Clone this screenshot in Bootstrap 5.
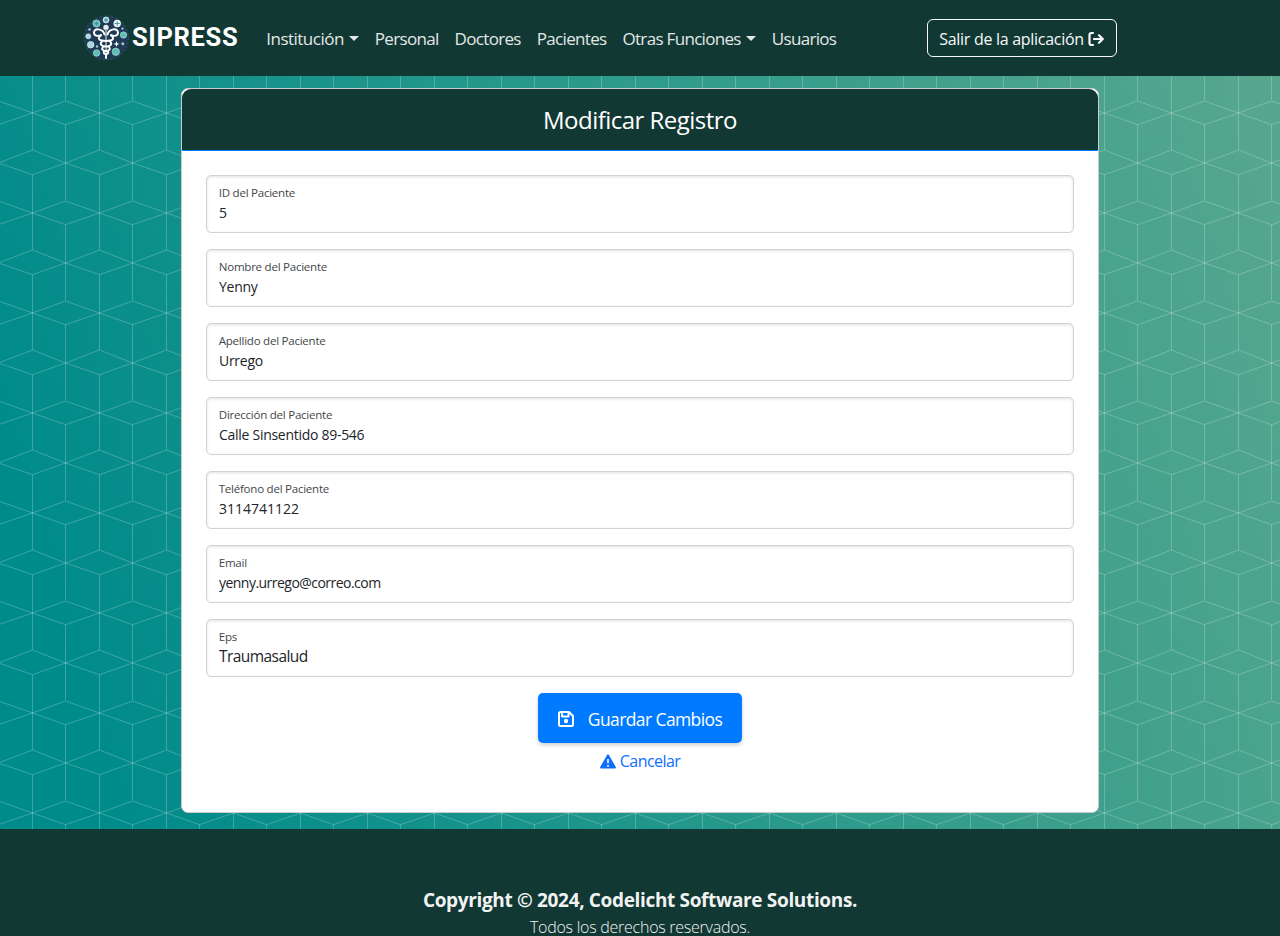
<!DOCTYPE html>
<html lang="es">
<head>
<meta charset="utf-8">
<meta name="viewport" content="width=device-width, initial-scale=1">
<title>SIPRESS</title>
<link href="https://cdn.jsdelivr.net/npm/bootstrap@5.3.0/dist/css/bootstrap.min.css" rel="stylesheet">
<style>
  html, body { height: 100%; }
  body {
    font-family: "Open Sans", "Noto Sans", sans-serif;
    letter-spacing: -.035em;
    overflow: hidden;
    background-image:
      url("data:image/svg+xml,%3Csvg xmlns='http://www.w3.org/2000/svg' width='67' height='100'%3E%3Cg fill='none' stroke='%23fff' stroke-opacity='.22'%3E%3Cpath d='M32.5 0V50M32.5 74.7V100M65.5 24.7V100'/%3E%3Cpath d='M-1.5 24.7L32.5 13L65.5 1L99.5 13M-34.500 13L-1.5 1L32.500 13L65.500 24.700L99.500 13M-1.500 63L32.500 50L65.500 63L32.500 74.700Z M65.500 63L99.500 50M65.500 63L99.500 74.700'/%3E%3C/g%3E%3C/svg%3E"),
      linear-gradient(73deg, #008b8b 10%, #2e9b8b 57%, #57a78e 98%);
    background-position: 0 0, 0 0;
    background-size: 67px 100px, 100% 936px;
  }
  .site-bar, .site-foot, .record-head { background-color: #123834; }
  .site-bar { height: 76px; }
  .site-bar .container { max-width: 1140px; }
  .brand-word { font: 700 25.5px/1 Roboto, sans-serif; letter-spacing: .65px; color: #fff; }
  .site-bar .nav-link { color: #e3e8e7; font-size: 17px; letter-spacing: -.04em; padding-top: 10px; }
  .site-bar .nav-item:first-child .nav-link { letter-spacing: -.03em; }
  .site-bar .dropdown-toggle::after { margin-left: 5px; }
  .site-bar .navbar-nav { margin-left: 20px; }
  .exit-btn { width: 190px; height: 38px; margin-right: 81px; font-size: 16px; padding: 8px 1px 6px 0; letter-spacing: -.018em; }
  .record { width: 918px; border: 1px solid #ccc; border-radius: 7px; margin-top: 12px; height: 725px; }
  .record-head { height: 62px; padding-top: 2px; border-bottom: 1px solid #007bff; border-radius: 9px 9px 0 0; color: #fff; }
  .record-head h1 { font-size: 24px; letter-spacing: -.022em; }
  .record .form-control, .record .form-select {
    font-size: 14px; letter-spacing: -.02em; color: #212529; border-color: #ced4da; border-radius: 5px;
    height: 58px; min-height: 58px; line-height: 1.25; background-image: none;
    box-shadow: inset 0 1px 3px rgba(0,0,0,.12);
  }
  .record .form-select { font-size: 15.5px; letter-spacing: -.036em; padding-top: 27px; padding-bottom: 9px; }
  .record input[type="tel"] { letter-spacing: 0; }
  .record input[type="email"] { letter-spacing: -.038em; }
  .record .form-floating > label,
  .record .form-floating > .form-control ~ label,
  .record .form-floating > .form-select ~ label {
    font-size: 13.6px; letter-spacing: -.022em; color: #212529; opacity: .85;
    transform: scale(.85) translateY(-6.2px) translateX(2px);
  }
  .save-btn { width: 204px; height: 50px; padding: 2px 1px 0 0; background: #007bff; font-size: 17.5px; letter-spacing: -.034em; gap: 13px; border-radius: 5px; box-shadow: 0 2px 4px rgba(0,0,0,.2); }
  .save-btn svg { margin-top: -1px; }
  .cancel-link { color: #0d6efd; font-size: 16px; line-height: 24px; margin-top: 6px; }
  .site-foot { height: 107px; margin-top: 16px; padding-top: 57px; color: #f1f3f3; }
  .foot-title { font-size: 19px; line-height: 29px; font-weight: 700; letter-spacing: -.018em; }
  .foot-sub { font-size: 16px; line-height: 24px; font-weight: 300; letter-spacing: -.016em; }
</style>
</head>
<body>
<nav class="navbar navbar-expand site-bar p-0">
  <div class="container">
    <a class="navbar-brand d-flex align-items-center p-0 m-0" href="#">
      <svg width="50" height="48" viewBox="82 14 50 48" aria-hidden="true">
        <circle cx="106.300" cy="38" r="22" fill="#203a56"/>
        <circle cx="106.300" cy="38" r="22" fill="none" stroke="#38606c" stroke-width=".8" stroke-dasharray="2 2"/>
        <g fill="#5cc0b8" stroke="#b5e2df" stroke-width=".6">
          <circle cx="96.500" cy="23.500" r="3.600"/><circle cx="123.500" cy="35" r="3.200"/><circle cx="115.800" cy="51.800" r="3.700"/><circle cx="96.600" cy="53" r="3.300"/>
        </g>
        <g fill="#a8d8dc" stroke="#dff" stroke-width=".6">
          <circle cx="90.700" cy="44.700" r="3.300"/><circle cx="88.300" cy="36.300" r="2.500"/><circle cx="106" cy="20" r="3"/>
        </g>
        <circle cx="117.200" cy="23.500" r="3.700" fill="#f2fafa"/>
        <path d="M117.200 21v5M114.700 23.500h5M106 18v4M104 20h4M96.500 21.500v4M94.500 23.500h4" stroke="#3d8f91" stroke-width=".9"/>
        <g fill="#9ccfd5"><circle cx="89.500" cy="29.500" r="1.300"/><circle cx="122.500" cy="28.700" r="1.100"/><circle cx="97" cy="46.500" r="1.200"/><circle cx="122.800" cy="43.700" r="1.500"/></g>
        <path d="M116.500 41l.8 2.200 2.200.8-2.200.8-.8 2.200-.8-2.200-2.200-.8 2.200-.8z" fill="#fff"/>
        <circle cx="106" cy="27.400" r="2.700" fill="#e7eceb"/>
        <path d="M106 29v28" stroke="#9fb5ba" stroke-width="1.600"/>
        <g fill="none" stroke="#fff" stroke-width="1.900" stroke-linecap="round">
          <path d="M104.500 34.500C103 28.500 94 27.500 94 32.500c0 3.800 4 4 7 2.500M107.500 34.500c1.500-6 10.500-7 10.500-2 0 3.800-4 4-7 2.500"/>
          <path d="M101 35.500c-4 2.500-2.500 5.500 5 5.500s9-3 5-5.500M102 41.500c-3 3 0 5 4 5s7-2 4-5M103 47c-2 2.500 0 4 3 4s5-1.500 3-4M104 51.500c-1 2 .5 2.500 2 2.500s3-.5 2-2.500M106 54v4"/>
        </g>
      </svg>
      <span class="brand-word">SIPRESS</span>
    </a>
    <ul class="navbar-nav me-auto">
      <li class="nav-item"><a class="nav-link dropdown-toggle" href="#">Institución</a></li>
      <li class="nav-item"><a class="nav-link" href="#">Personal</a></li>
      <li class="nav-item"><a class="nav-link" href="#">Doctores</a></li>
      <li class="nav-item"><a class="nav-link" href="#">Pacientes</a></li>
      <li class="nav-item"><a class="nav-link dropdown-toggle" href="#">Otras Funciones</a></li>
      <li class="nav-item"><a class="nav-link" href="#">Usuarios</a></li>
    </ul>
    <a class="btn btn-outline-light exit-btn d-flex align-items-center justify-content-center gap-1" href="#">Salir de la aplicación
      <svg width="16" height="16" viewBox="0 0 16 16" fill="none" stroke="currentColor" stroke-width="2.200" stroke-linecap="round" stroke-linejoin="round" aria-hidden="true"><path d="M5 2H3.500Q1.500 2 1.500 4v8q0 2 2 2H5M6 8h8.500M11 4.300L14.800 8 11 11.700"/></svg>
    </a>
  </div>
</nav>
<main class="d-flex justify-content-center">
  <div class="card record">
    <div class="record-head d-flex align-items-center justify-content-center"><h1 class="m-0 fw-normal">Modificar Registro</h1></div>
    <form class="card-body p-4">
      <div class="form-floating mb-3"><input class="form-control" id="pid" value="5" placeholder=" "><label for="pid">ID del Paciente</label></div>
      <div class="form-floating mb-3"><input class="form-control" id="nom" value="Yenny" placeholder=" "><label for="nom">Nombre del Paciente</label></div>
      <div class="form-floating mb-3"><input class="form-control" id="ape" value="Urrego" placeholder=" "><label for="ape">Apellido del Paciente</label></div>
      <div class="form-floating mb-3"><input class="form-control" id="dir" value="Calle Sinsentido 89-546" placeholder=" "><label for="dir">Dirección del Paciente</label></div>
      <div class="form-floating mb-3"><input type="tel" class="form-control" id="tel" value="3114741122" placeholder=" "><label for="tel">Teléfono del Paciente</label></div>
      <div class="form-floating mb-3"><input type="email" class="form-control" id="mail" value="yenny.urrego@correo.com" placeholder=" "><label for="mail">Email</label></div>
      <div class="form-floating mb-3"><select class="form-select" id="eps"><option>Traumasalud</option></select><label for="eps">Eps</label></div>
      <div class="d-flex flex-column align-items-center">
        <button type="button" class="btn btn-primary border-0 save-btn d-flex align-items-center justify-content-center">
          <svg width="18" height="18" viewBox="0 0 18 18" fill="none" stroke="currentColor" stroke-width="2" stroke-linejoin="round" aria-hidden="true"><path d="M3.500 2H12l4 4v8.500q0 1.500-1.500 1.500h-11Q2 16 2 14.500v-11Q2 2 3.500 2zM5 2v4.500h6.500V2"/><circle cx="9" cy="11" r="2.200" fill="currentColor" stroke="none"/></svg>Guardar Cambios
        </button>
        <a class="cancel-link text-decoration-none d-flex align-items-center gap-1" href="#">
          <svg width="16" height="15" viewBox="0 0 16 15" aria-hidden="true"><path d="M8 1.200L15 13.500H1z" fill="currentColor" stroke="currentColor" stroke-width="1.800" stroke-linejoin="round"/><path d="M8 5v4.300M8 11v1.700" stroke="#fff" stroke-width="1.600"/></svg>Cancelar
        </a>
      </div>
    </form>
  </div>
</main>
<footer class="site-foot text-center">
  <div class="foot-title">Copyright © 2024, Codelicht Software Solutions.</div>
  <div class="foot-sub">Todos los derechos reservados.</div>
</footer>
<script src="https://cdn.jsdelivr.net/npm/bootstrap@5.3.0/dist/js/bootstrap.bundle.min.js"></script>
</body>
</html>
